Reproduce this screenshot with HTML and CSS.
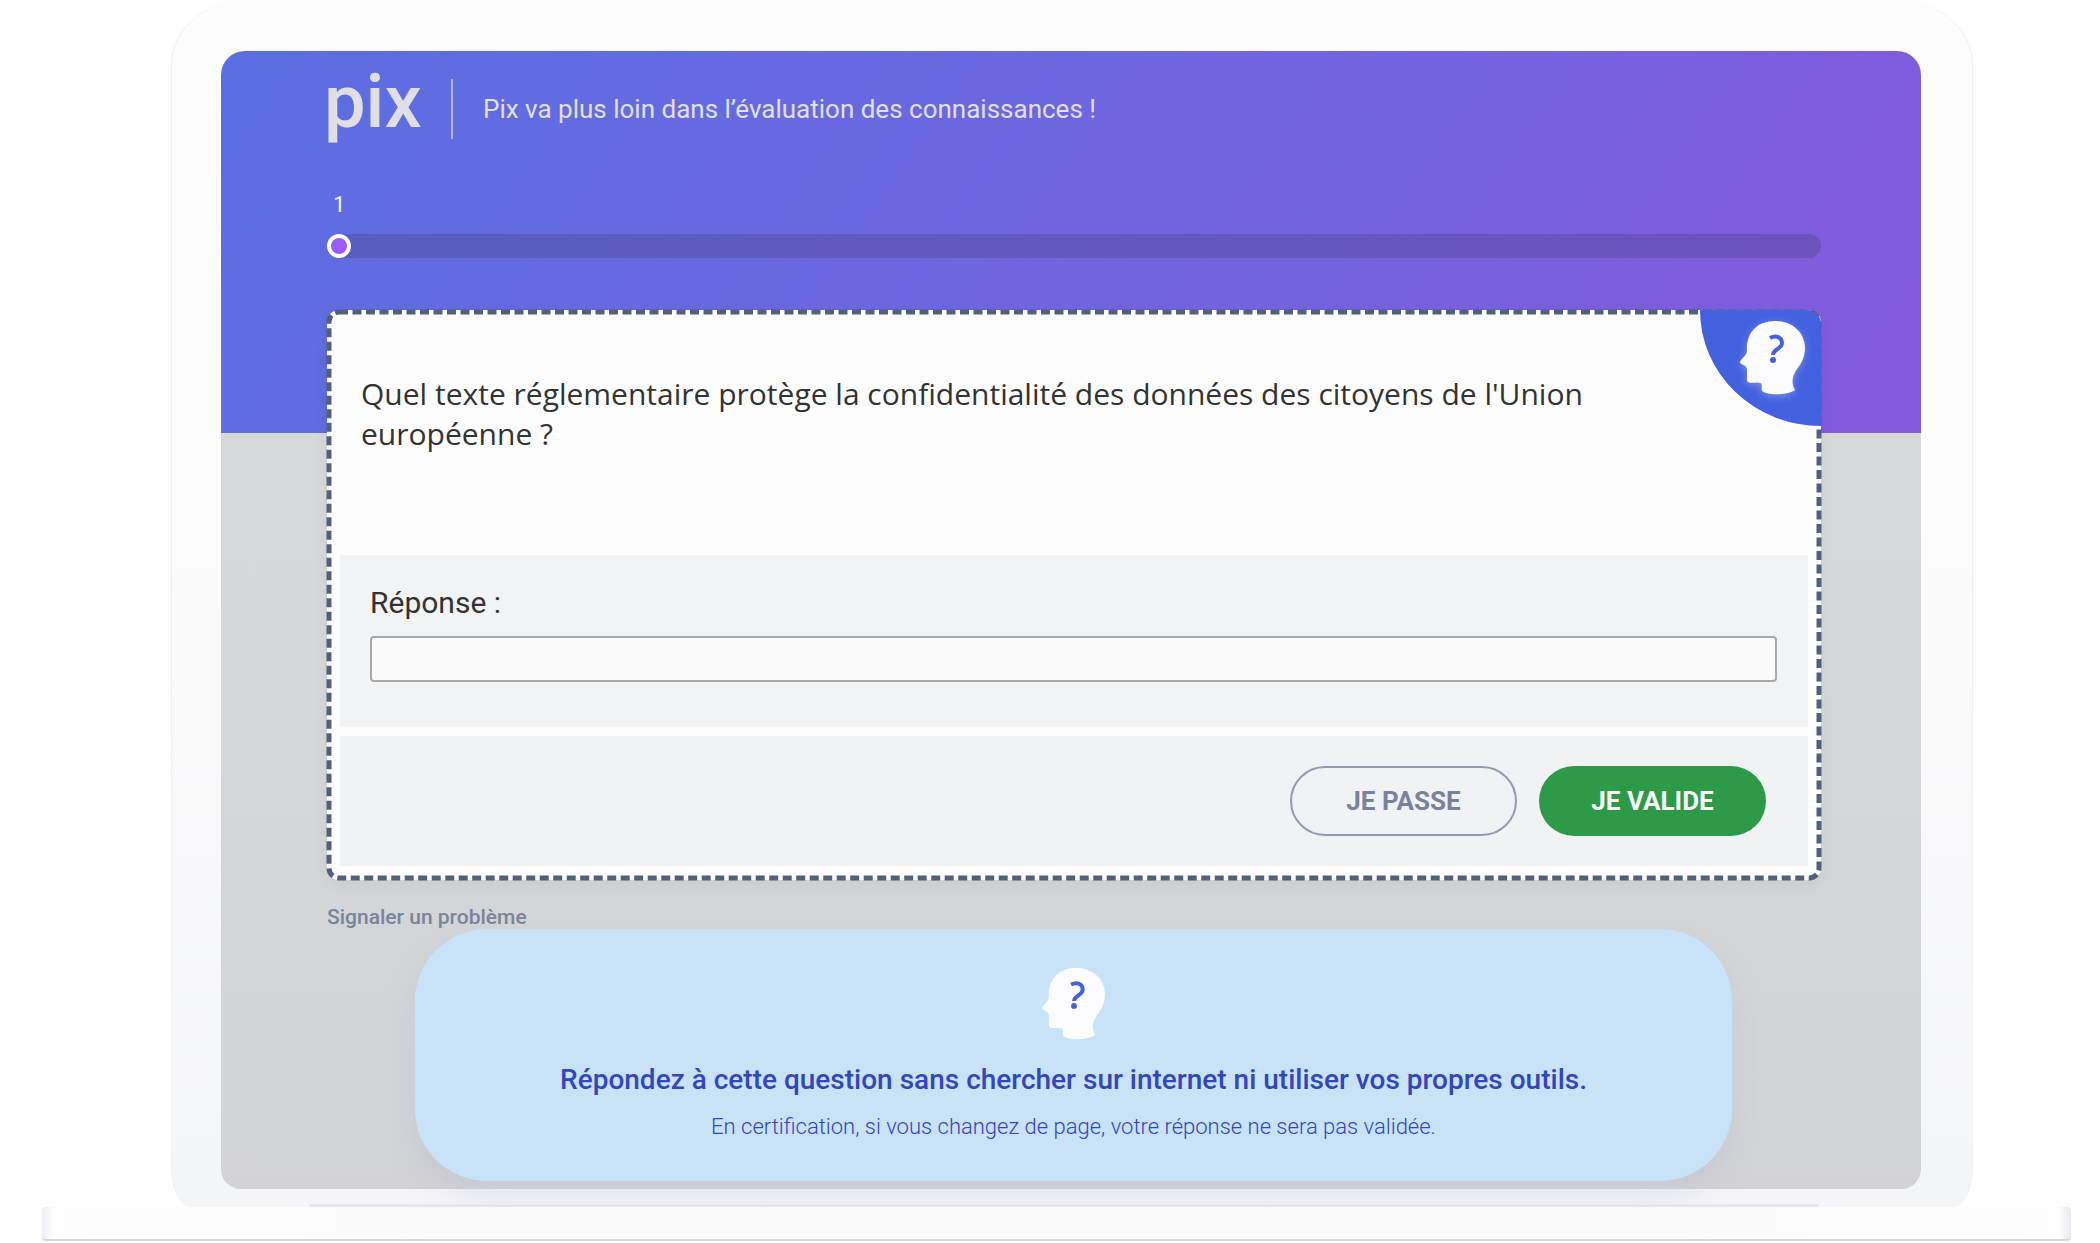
FILE: index.html
```html
<!DOCTYPE html>
<html lang="fr">
<head>
  <meta charset="UTF-8">
  <title>Pix</title>
  <link rel="stylesheet" href="styles.css">
</head>
<body>
  <!-- Head icon, used in the card corner and in the notice -->
  <svg class="sprite" aria-hidden="true">
    <symbol id="head" viewBox="0 0 66 74">
      <path class="head-shape" d="M35 0C53 0 65 12 65 27C65 35 62 42 57 48C52 55 51 62 55 69C49 74 28 75 22 70C21 66 23 63 20 62C17 60 10 64 7 60V48C6 43 0 44 0 41C1 38 7 34 7 30C6 12 17 0 35 0Z"/>
      <path class="head-mark" d="M30 17C36 14 42 16 42 22C42 28 33 28 33 34"/>
      <circle class="head-dot" cx="33" cy="39" r="3"/>
    </symbol>
  </svg>

  <div class="laptop">
    <div class="lid">
      <main class="screen">
        <header class="header">
          <span class="logo">pix</span>
          <span class="title">Pix va plus loin dans l’évaluation des connaissances !</span>
        </header>

        <div class="step">1</div>
        <div class="progress"><div class="progress-dot"></div></div>

        <form class="card">
          <svg class="card-outline" aria-hidden="true"><rect width="100%" height="100%" rx="10"/></svg>
          <div class="badge">
            <svg class="badge-icon"><use href="#head"/></svg>
          </div>
          <p class="question">Quel texte réglementaire protège la confidentialité des données des citoyens de l'Union européenne ?</p>
          <div class="answer">
            <label for="answer">Réponse :</label>
            <input type="text" id="answer">
          </div>
          <div class="actions">
            <button type="button" class="btn btn-skip">JE PASSE</button>
            <button type="button" class="btn btn-validate">JE VALIDE</button>
          </div>
        </form>

        <a class="report" href="#">Signaler un problème</a>

        <section class="notice">
          <svg class="notice-icon"><use href="#head"/></svg>
          <p class="notice-title">Répondez à cette question sans chercher sur internet ni utiliser vos propres outils.</p>
          <p class="notice-text">En certification, si vous changez de page, votre réponse ne sera pas validée.</p>
        </section>
      </main>
      <div class="hinge"></div>
    </div>
    <div class="base"></div>
  </div>
</body>
</html>
```

FILE: styles.css
```css
* {
  box-sizing: border-box;
}

body {
  margin: 0;
  background: #fff;
  font-family: Roboto, "Liberation Sans", sans-serif;
}

p {
  margin: 0;
}

.sprite {
  position: absolute;
  width: 0;
  height: 0;
}

/* Laptop */
.laptop {
  padding: 0 29px 2px 42px;
  overflow: hidden;
}

.lid {
  margin: 0 98px 0 129px;
  padding: 51px 51px 0 49px;
  border: solid #f0f0f2;
  border-width: 0 1px;
  border-radius: 76px 76px 20px 20px / 64px 64px 40px 40px;
  background: linear-gradient(#fdfdfd, #fcfcfc 40%, #f4f5f8);
}

.screen {
  display: flow-root;
  padding: 28px 100px 8px 106px;
  border-radius: 24px 24px 20px 20px;
  background:
    linear-gradient(125deg, #5a6fe1, #6f66e0 50%, #845adc) top / 100% 382px no-repeat,
    linear-gradient(#d7d8da 382px, #d2d5d6 90%, #d3d3d6);
}

.hinge {
  height: 3px;
  margin: 15px 103px 0 89px;
  background: #e6e7ee;
}

.base {
  height: 34px;
  border-radius: 4px;
  border-bottom: 2px solid #d6d8e0;
  background: linear-gradient(90deg, #eceef2, #fefefe 12px, #fafafa 20%, #fafafa 80%, #fefefe calc(100% - 12px), #e6e8ee);
}

/* Header */
.header {
  display: flex;
  align-items: center;
  height: 60px;
  color: #e0e0e4;
}

.logo {
  align-self: flex-start;
  width: 127px;
  margin-left: -3px;
  font-size: 74px;
  font-weight: 500;
  line-height: 46px;
}

.title {
  padding-left: 30px;
  border-left: 2px solid #b3b2ec;
  font-size: 26px;
  line-height: 60px;
}

.step {
  margin: 54px 0 17px 6px;
  color: #f4f4fa;
  font-size: 22px;
  line-height: 24px;
}

.progress {
  height: 24px;
  border-radius: 12px;
  background: rgba(70, 62, 122, 0.32);
}

.progress-dot {
  width: 24px;
  height: 24px;
  border: 4px solid #fff;
  border-radius: 50%;
  background: #9a5cff;
}

/* Question card */
.card {
  position: relative;
  margin-top: 52px;
  padding: 14px 13px;
  border-radius: 12px;
  background: #fdfdfd;
  box-shadow: 0 4px 16px rgba(0, 0, 0, 0.05);
}

.card-outline {
  position: absolute;
  top: 2px;
  left: 2px;
  width: calc(100% - 4px);
  height: calc(100% - 4px);
  overflow: visible;
  fill: none;
  stroke: #53607c;
  stroke-width: 5;
  stroke-dasharray: 9 4.5;
  pointer-events: none;
}

.badge {
  position: absolute;
  top: 0;
  right: 0;
  width: 121px;
  height: 116px;
  padding: 11px 15px 0 40px;
  border-radius: 0 14px 0 100%;
  background: #4360de;
}

.badge-icon {
  display: block;
  width: 66px;
  height: 74px;
  filter: drop-shadow(0 2px 4px rgba(255, 255, 255, 0.3));
}

.head-shape {
  fill: #fcfcfe;
}

.head-mark {
  fill: none;
  stroke: #4360de;
  stroke-width: 4;
}

.head-dot {
  fill: #4360de;
}

.question {
  padding: 50px 200px 101px 21px;
  color: #333;
  font-family: "Open Sans", sans-serif;
  font-size: 30px;
  line-height: 40px;
}

.answer {
  padding: 32px 31px 45px 30px;
  background: #f2f3f5;
}

.answer label {
  display: block;
  margin-bottom: 17px;
  color: #333;
  font-size: 30px;
  line-height: 32px;
}

.answer input {
  display: block;
  width: 100%;
  height: 46px;
  padding: 0 12px;
  border: 2px solid #a6a8aa;
  border-radius: 4px;
  background: #fbfbfb;
  font-size: 26px;
}

.actions {
  display: flex;
  justify-content: flex-end;
  gap: 22px;
  margin-top: 9px;
  padding: 30px 42px;
  background: #f0f2f4;
}

.btn {
  width: 227px;
  height: 70px;
  border-radius: 35px;
  font-family: inherit;
  font-size: 26px;
  font-weight: 700;
  cursor: pointer;
}

.btn-skip {
  border: 2px solid #929bb0;
  background: transparent;
  color: #78839b;
}

.btn-validate {
  border: none;
  background: #2d9a48;
  color: #fafafa;
}

.report {
  display: block;
  width: fit-content;
  margin-top: 25px;
  color: #7a849b;
  font-size: 21px;
  font-weight: 500;
  line-height: 24px;
  text-decoration: none;
}

/* Notice */
.notice {
  display: flex;
  flex-direction: column;
  align-items: center;
  margin: 0 89px 0 88px;
  padding: 39px 20px 40px;
  border-radius: 72px;
  background: #c8e3f8;
  color: #3445bd;
  text-align: center;
  box-shadow: 0 14px 28px rgba(170, 175, 205, 0.25);
}

.notice-icon {
  width: 64px;
  height: 72px;
  margin-bottom: 24px;
}

.notice-title {
  margin-bottom: 17px;
  font-size: 28px;
  font-weight: 500;
  line-height: 32px;
}

.notice-text {
  font-size: 22px;
  font-weight: 300;
  line-height: 28px;
}
```
